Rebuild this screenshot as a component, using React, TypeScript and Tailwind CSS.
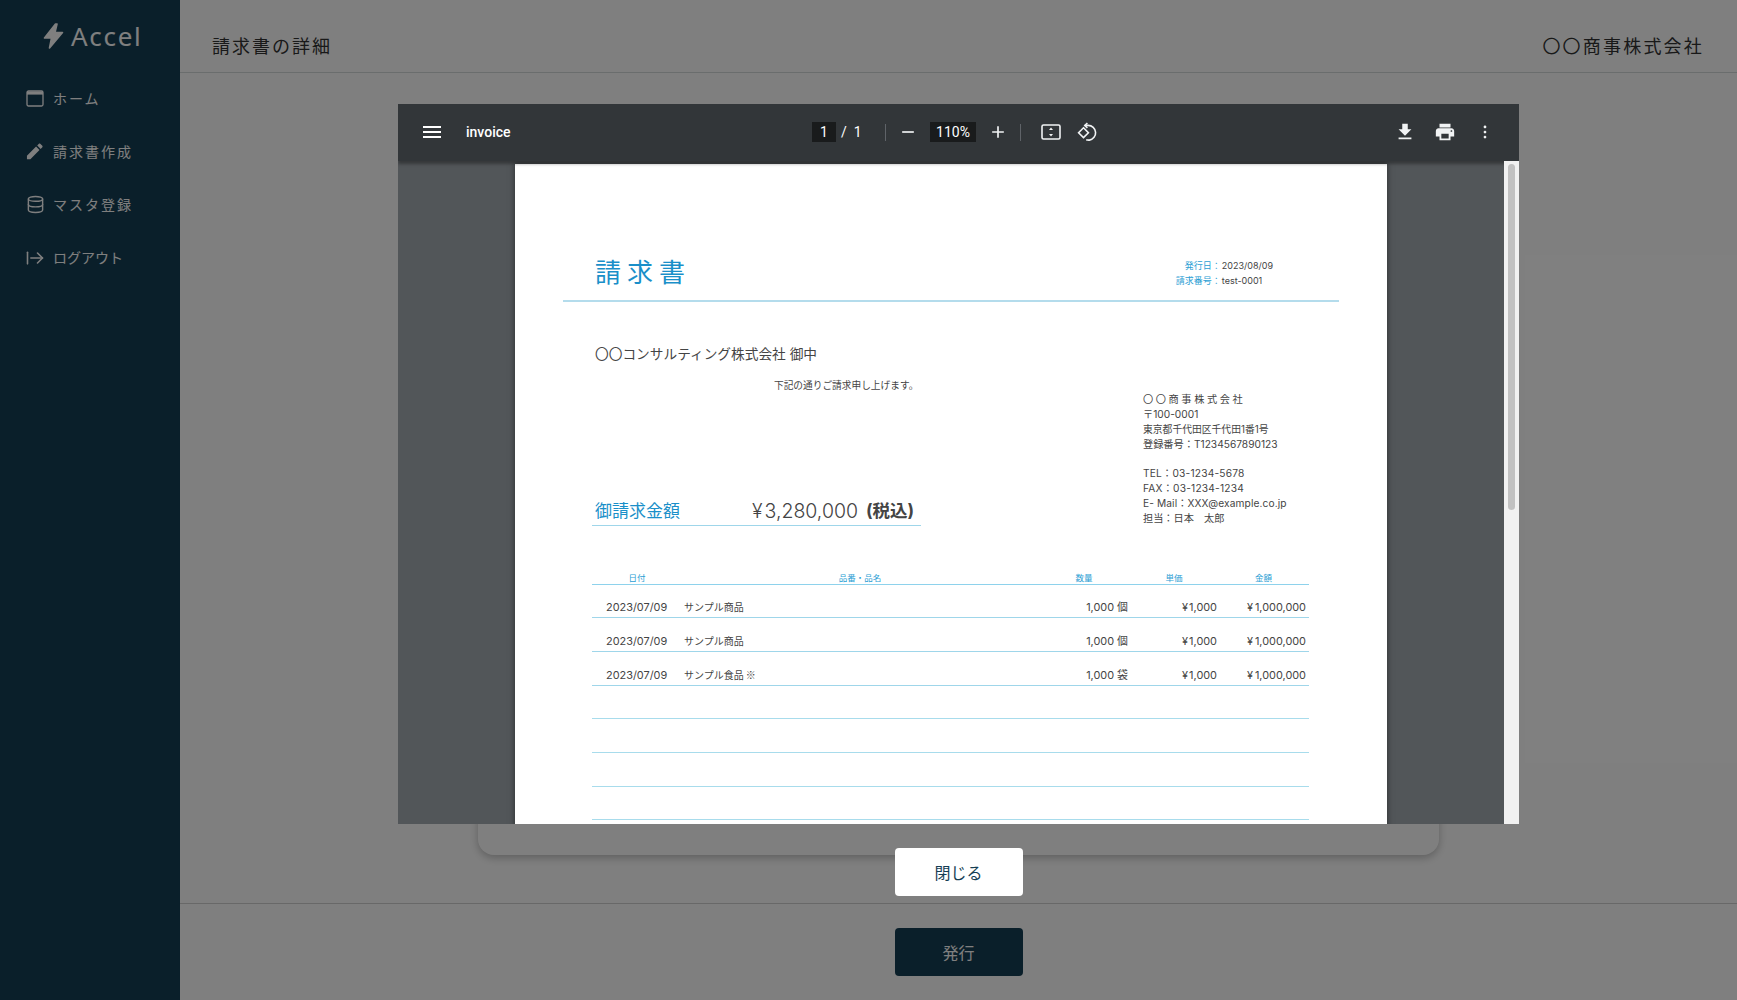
import { ArrowRightFromLine, Database } from "lucide-react";

const FONT = "font-['Inter','Noto_Sans_CJK_JP',sans-serif]";

const items = [
  { date: "2023/07/09", name: "サンプル商品", note: "", qty: "1,000 個" },
  { date: "2023/07/09", name: "サンプル商品", note: "", qty: "1,000 個" },
  { date: "2023/07/09", name: "サンプル食品", note: "※", qty: "1,000 袋" },
];

const WindowIcon = () => (
  <svg width="18" height="17" viewBox="0 0 18 17" fill="none">
    <rect x="1" y="1" width="16" height="15" rx="1.5" stroke="currentColor" strokeWidth="1.3" />
    <path d="M1 1.5h16V4.6H1z" fill="currentColor" />
  </svg>
);

const PencilIcon = () => (
  <svg width="18" height="18" viewBox="0 0 18 18" fill="currentColor">
    <path d="M1 17v-3.6L10.6 3.8l3.6 3.6L4.6 17H1zM11.8 2.6 13.6.8c.4-.4 1-.4 1.4 0l2.2 2.2c.4.4.4 1 0 1.4l-1.8 1.8-3.6-3.6z" transform="scale(.95)" />
  </svg>
);

const Icon = ({ d, size = 22 }: { d: string; size?: number }) => (
  <svg width={size} height={size} viewBox="0 0 24 24" fill="currentColor">
    <path d={d} />
  </svg>
);

function InvoicePage() {
  return (
    <div className={`w-[872px] h-[800px] shrink-0 bg-white shadow-[0_0_6px_rgba(0,0,0,0.5)] text-[#444] ${FONT}`}>
      <div className="mx-[48px] h-[138px] flex items-end justify-between pl-[32px] pr-[66px] pb-[9px] border-b-2 border-[#b4dcec]">
        <div className="text-[26px] leading-[36px] tracking-[6px] text-[#1a8fc9]">請求書</div>
        <div className="text-[9px] leading-[15px] mb-[3px]">
          <div className="flex">
            <span className="w-[47px] text-right text-[#2b9ed4] text-[9px] whitespace-nowrap">発行日：</span>
            <span className="ml-[1px]">2023/08/09</span>
          </div>
          <div className="flex">
            <span className="w-[47px] text-right text-[#2b9ed4] text-[9px] whitespace-nowrap">請求番号：</span>
            <span className="ml-[1px]">test-0001</span>
          </div>
        </div>
      </div>

      <div className="flex pl-[77px]">
        <div className="w-[329px] pt-[42px]">
          <div className="pl-[3px] text-[13.7px] leading-[20px] whitespace-nowrap">〇〇コンサルティング株式会社 御中</div>
          <div className="mt-[15px] pl-[182px] text-[9.7px] leading-[14px] whitespace-nowrap">下記の通りご請求申し上げます。</div>
          <div className="mt-[105px] h-[28px] pl-[3px] flex items-center border-b border-[#9fd6ea]">
            <span className="w-[157px] text-[17px] text-[#1a8fc9]">御請求金額</span>
            <span className="text-[19.5px] font-light"><span className="mr-[2px]">¥</span>3,280,000</span>
            <span className="ml-[8px] text-[17.5px] font-bold">(税込)</span>
          </div>
        </div>
        <div className="ml-[222px] pt-[90px] text-[10.2px] leading-[15px] whitespace-nowrap">
          <div className="tracking-[2.6px]">〇〇商事株式会社</div>
          <div>〒100-0001</div>
          <div className="text-[9.8px]">東京都千代田区千代田1番1号</div>
          <div>登録番号：T1234567890123</div>
          <div className="mt-[14px] tracking-[0.2px]">TEL：03-1234-5678</div>
          <div className="tracking-[0.2px]">FAX：03-1234-1234</div>
          <div className="tracking-[0.1px]">E- Mail：XXX@example.co.jp</div>
          <div>担当：日本　太郎</div>
        </div>
      </div>

      <div className="ml-[77px] w-[717px] mt-[41.5px]">
        <div className="grid grid-cols-[90px_356px_92px_88px_91px] h-[16px] items-end text-center text-[8.5px] leading-[12px] text-[#2b9ed4] border-b border-[#8ed2ec] box-content">
          <div>日付</div>
          <div>品番・品名</div>
          <div>数量</div>
          <div>単価</div>
          <div>金額</div>
        </div>
        {items.map((item, i) => (
          <div key={i} className="grid grid-cols-[90px_356px_92px_88px_91px] h-[33.7px] items-end pb-[3px] text-[10.9px] leading-[14px] border-b border-[#9fd6ea]">
            <div className="pl-[14px] whitespace-nowrap">{item.date}</div>
            <div className="pl-[2px] text-[10px]">
              {item.name}
              {item.note && <span className="ml-[2px] font-['Noto_Sans_CJK_JP',sans-serif]">{item.note}</span>}
            </div>
            <div className="text-right pr-[2px]">{item.qty}</div>
            <div className="text-right pr-[1px]"><span className="mr-[1px]">¥</span>1,000</div>
            <div className="text-right pr-[3px]"><span className="mr-[2px]">¥</span>1,000,000</div>
          </div>
        ))}
        {[0, 1, 2, 3, 4].map((i) => (
          <div key={i} className="h-[33.7px] border-b border-[#a8dcec]" />
        ))}
      </div>
    </div>
  );
}

function PdfViewer() {
  return (
    <div className="mt-[104px] w-[1121px] h-[720px] flex flex-col bg-[#525659] overflow-hidden">
      <div className="h-[57px] pb-[1px] shrink-0 bg-[#323639] flex items-center text-white font-['Roboto',sans-serif] shadow-[0_3px_3px_rgba(0,0,0,0.35)] relative z-10">
        <div className="ml-[20px] w-[28px] flex justify-center"><Icon size={24} d="M3 18h18v-2H3v2zm0-5h18v-2H3v2zm0-7v2h18V6H3z" /></div>
        <div className="ml-[20px] w-[346px] text-[14px] font-medium">invoice</div>
        <div className="w-[24px] h-[20px] bg-[#191b1c] text-[14px] flex items-center justify-center">1</div>
        <div className="ml-[5px] w-[44px] text-[14px]">/&nbsp;&nbsp;1</div>
        <div className="w-px h-[17px] bg-[#5f6368]" />
        <div className="ml-[12px] text-[#f1f3f4]"><Icon size={20} d="M19 13H5v-2h14v2z" /></div>
        <div className="ml-[12px] w-[46px] h-[20px] bg-[#191b1c] text-[14px] flex items-center justify-center">110%</div>
        <div className="ml-[12px] text-[#f1f3f4]"><Icon size={20} d="M19 13h-6v6h-2v-6H5v-2h6V5h2v6h6v2z" /></div>
        <div className="ml-[12px] w-px h-[17px] bg-[#5f6368]" />
        <svg className="ml-[20px]" width="20" height="16" viewBox="0 0 20 16" fill="none" stroke="#f1f3f4">
          <rect x="1" y="1" width="18" height="14" rx="1.5" strokeWidth="1.6" />
          <path d="M10 3.5 8 6h4zM10 12.5 8 10h4z" fill="#f1f3f4" stroke="none" />
        </svg>
        <svg className="ml-[16px]" width="20" height="20" viewBox="0 0 20 20" fill="none" stroke="#f1f3f4" strokeWidth="1.6">
          <path d="M6.5 5.8 11.4 10.7 6.5 15.6 1.6 10.7z" />
          <path d="M7.8 3.4h3.4a7.4 7.4 0 0 1 1.2 14.7 7 7 0 0 1-3.2-.4" />
          <path d="M10.4 1 7.8 3.4l2.6 2.4" />
        </svg>
        <div className="ml-auto flex items-center text-[#f1f3f4]">
          <Icon d="M19 9h-4V3H9v6H5l7 7 7-7zM5 18v2h14v-2H5z" />
          <div className="ml-[18px]"><Icon d="M19 8H5c-1.66 0-3 1.34-3 3v6h4v4h12v-4h4v-6c0-1.66-1.34-3-3-3zm-3 11H8v-5h8v5zm3-7c-.55 0-1-.45-1-1s.45-1 1-1 1 .45 1 1-.45 1-1 1zm-1-9H6v4h12V3z" /></div>
          <div className="ml-[18px] mr-[23px]"><Icon d="M12 8c.8 0 1.5-.7 1.5-1.500S12.800 5 12 5s-1.500.7-1.500 1.500S11.200 8 12 8zm0 2.500c-.8 0-1.500.7-1.500 1.500s.7 1.500 1.500 1.500 1.500-.7 1.500-1.500-.7-1.500-1.500-1.500zm0 5.500c-.8 0-1.500.7-1.500 1.500S11.200 19 12 19s1.500-.7 1.500-1.500S12.800 16 12 16z" /></div>
        </div>
      </div>
      <div className="flex-1 flex min-h-0 overflow-hidden pt-[3px]">
        <div className="flex-1 min-w-0 flex justify-center"><InvoicePage /></div>
        <div className="w-[15px] shrink-0 -mt-[3px] bg-[#f1f1f1] px-[4px] pt-[3px] relative z-20">
          <div className="h-[346px] rounded-[4px] bg-[#c1c1c1]" />
        </div>
      </div>
    </div>
  );
}

export default function App() {
  const nav = [
    { label: "ホーム", icon: <WindowIcon />, tracking: "tracking-[2px]" },
    { label: "請求書作成", icon: <PencilIcon />, tracking: "tracking-[2px]" },
    { label: "マスタ登録", icon: <Database size={19} strokeWidth={1.8} />, tracking: "tracking-[2px]" },
    { label: "ログアウト", icon: <ArrowRightFromLine size={20} strokeWidth={1.9} />, tracking: "tracking-[0px]" },
  ];

  return (
    <div className={`relative flex h-screen overflow-hidden bg-white ${FONT}`}>
      <aside className="w-[180px] shrink-0 bg-[#153e54] text-white">
        <div className="h-[72px] pl-[43px] flex items-center font-['Noto_Sans',sans-serif]">
          <svg width="21" height="26" viewBox="0 0 21 26" fill="currentColor" stroke="currentColor" strokeWidth="1.6" strokeLinejoin="round">
            <path d="M12.500 1 1.500 15h7L6.500 25 19.500 9.500h-7.500L14 1z" />
          </svg>
          <span className="ml-[7px] text-[26px] leading-[30px] tracking-[1.700px]">Accel</span>
        </div>
        <nav className="flex flex-col">
          {nav.map((n) => (
            <div key={n.label} className="h-[53px] pl-[25px] flex items-center gap-[8px] text-[14px]">
              <span className="w-[20px] flex justify-center">{n.icon}</span>
              <span className={n.tracking}>{n.label}</span>
            </div>
          ))}
        </nav>
      </aside>

      <main className="flex-1 min-w-0 flex flex-col">
        <header className="h-[73px] shrink-0 pl-[32px] pr-[33px] pt-[20px] flex items-center justify-between border-b border-[#d4dadb] text-[18px] text-[#333]">
          <div className="tracking-[2px]">請求書の詳細</div>
          <div className="tracking-[2.200px]">〇〇商事株式会社</div>
        </header>
        <div className="flex-1 min-h-0 py-[48px]">
          <div className="mx-auto w-[961px] h-full rounded-[16px] bg-white shadow-[0_3px_8px_rgba(0,0,0,0.25)]" />
        </div>
        <footer className="h-[97px] shrink-0 pt-[24px] flex justify-center border-t border-[#d0d0d0]">
          <button className="w-[128px] h-[48px] pt-[1px] rounded-[4px] bg-[#153e54] text-white text-[16px]">発行</button>
        </footer>
      </main>

      <div className="absolute inset-0 bg-black/50 pl-[180px] flex flex-col items-center">
        <PdfViewer />
        <button className="mt-[24px] w-[128px] h-[48px] pt-[1px] rounded-[4px] bg-white text-[#153e54] text-[16px]">閉じる</button>
      </div>
    </div>
  );
}
